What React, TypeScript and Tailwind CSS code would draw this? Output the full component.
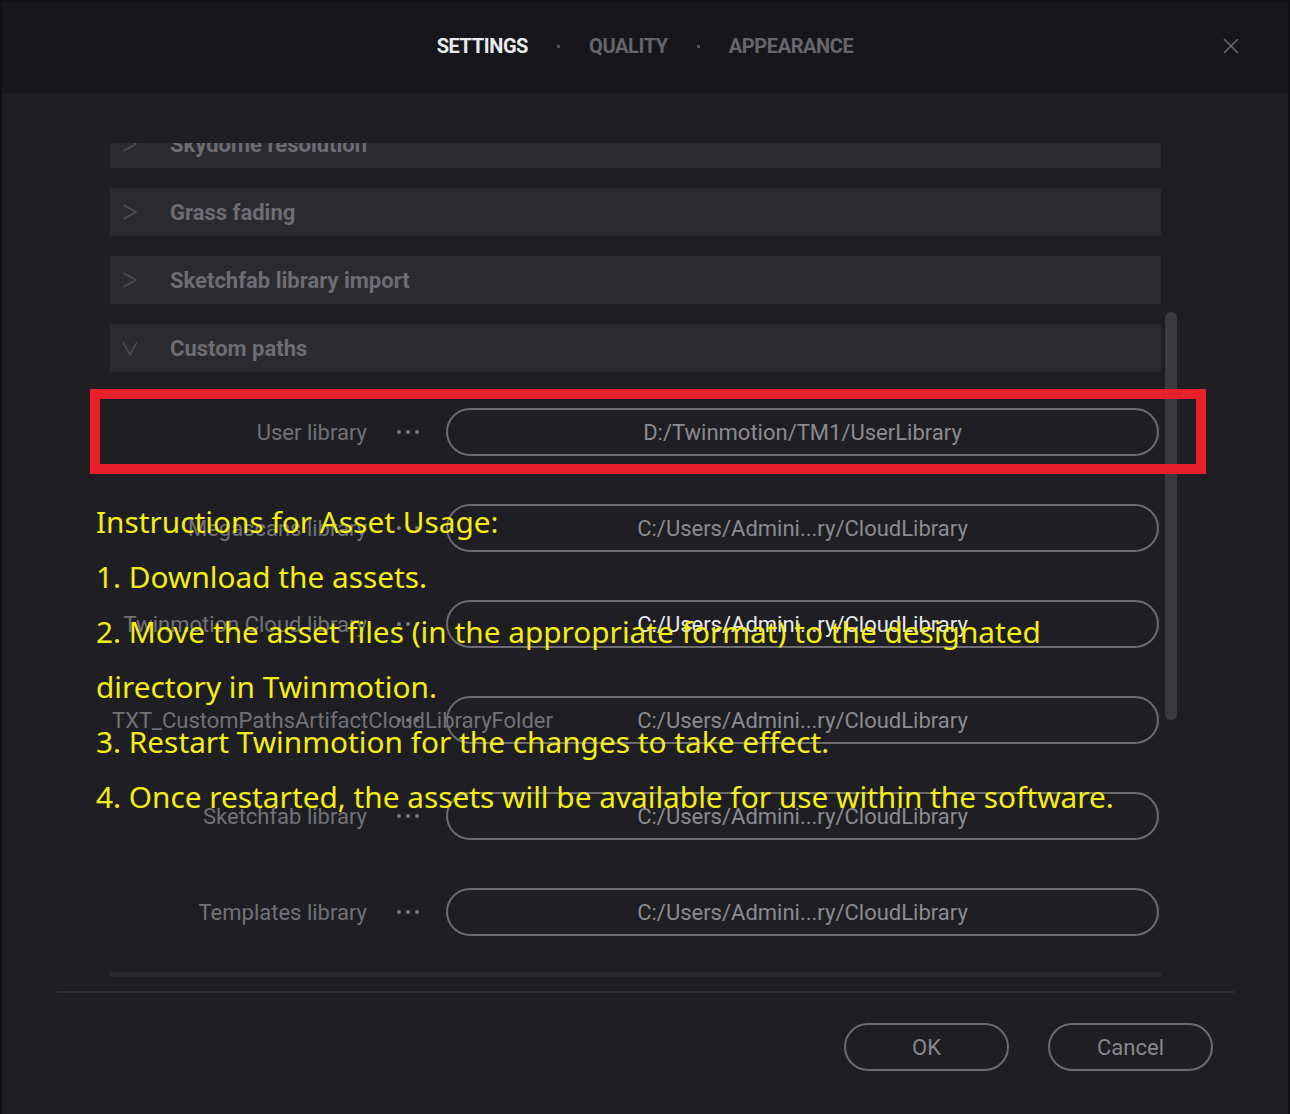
import React from 'react';

const pathRows = [
    { label: 'User library', value: 'D:/Twinmotion/TM1/UserLibrary', bright: false },
    { label: 'Megascans library', value: 'C:/Users/Admini...ry/CloudLibrary', bright: false },
    { label: 'Twinmotion Cloud library', value: 'C:/Users/Admini...ry/CloudLibrary', bright: true },
    { label: 'TXT_CustomPathsArtifactCloudLibraryFolder', value: 'C:/Users/Admini...ry/CloudLibrary', bright: false },
    { label: 'Sketchfab library', value: 'C:/Users/Admini...ry/CloudLibrary', bright: false },
    { label: 'Templates library', value: 'C:/Users/Admini...ry/CloudLibrary', bright: false },
];

const instructions = [
    'Instructions for Asset Usage:',
    '1. Download the assets.',
    '2. Move the asset files (in the appropriate format) to the designated',
    'directory in Twinmotion.',
    '3. Restart Twinmotion for the changes to take effect.',
    '4. Once restarted, the assets will be available for use within the software.',
];

function Chevron({ open }: { open?: boolean }) {
    return (
        <svg width="16" height="16" viewBox="0 0 16 16" fill="none">
            {open ? (
                <polyline points="1,2 8,15 15,2" stroke="#4e4e54" strokeWidth="1.5" />
            ) : (
                <polyline points="1.5,1 14,8 1.5,15" stroke="#4e4e54" strokeWidth="1.5" />
            )}
        </svg>
    );
}

function Section({ title, open }: { title: string; open?: boolean }) {
    return (
        <div className="flex h-[48px] shrink-0 items-center bg-[#2b2b2f]">
            <div className="flex w-[60px] items-center pl-[12px]">
                <Chevron open={open} />
            </div>
            <span className="text-[22px] font-bold text-[#6d6d73]">{title}</span>
        </div>
    );
}

function PathRow({ label, value, bright }: { label: string; value: string; bright: boolean }) {
    return (
        <div className="flex h-[96px] shrink-0 items-center">
            <div className="ml-[2px] w-[255px] whitespace-nowrap text-right text-[22px] text-[#727278]">{label}</div>
            <div className="ml-[30px] flex gap-[5px]">
                <span className="h-[4px] w-[4px] rounded-full bg-[#7a7a80]" />
                <span className="h-[4px] w-[4px] rounded-full bg-[#7a7a80]" />
                <span className="h-[4px] w-[4px] rounded-full bg-[#7a7a80]" />
            </div>
            <div
                className={
                    bright
                        ? 'ml-[27px] flex h-[48px] w-[713px] items-center justify-center rounded-full border-2 border-[#6b6b70] text-[22px] text-[#e8e8ec]'
                        : 'ml-[27px] flex h-[48px] w-[713px] items-center justify-center rounded-full border-2 border-[#6b6b70] text-[22px] text-[#8b8b90]'
                }
            >
                {value}
            </div>
        </div>
    );
}

export default function App() {
    return (
        <div className="relative flex h-[1114px] w-[1290px] flex-col overflow-hidden border-2 border-b-0 border-[#111114] bg-[#1f1f23] font-['Roboto',sans-serif]">
            <header className="grid h-[91px] shrink-0 grid-cols-[1fr_auto_1fr] items-center bg-[#17171b] pb-[3px]">
                <div />
                <nav className="flex items-center gap-[29px] text-[20px] font-bold uppercase tracking-[-0.4px]">
                    <span className="text-[#ebebef]">Settings</span>
                    <span className="h-[3px] w-[3px] bg-[#55555b]" />
                    <span className="text-[#66666c]">Quality</span>
                    <span className="h-[3px] w-[3px] bg-[#55555b]" />
                    <span className="text-[#66666c]">Appearance</span>
                </nav>
                <div className="flex justify-end pr-[49px]">
                    <svg width="16" height="16" viewBox="0 0 16 16" fill="none">
                        <path d="M1 1L15 15M15 1L1 15" stroke="#6a6a70" strokeWidth="1.5" />
                    </svg>
                </div>
            </header>

            <div className="ml-[108px] mt-[50px] flex h-[834px] shrink-0">
                <div className="w-[1051px] overflow-hidden">
                    <div className="-mt-[23px] flex flex-col">
                        <div className="flex flex-col gap-[20px]">
                            <Section title="Skydome resolution" />
                            <Section title="Grass fading" />
                            <Section title="Sketchfab library import" />
                            <Section title="Custom paths" open />
                        </div>
                        <div className="mt-[12px] flex flex-col">
                            {pathRows.map((row) => (
                                <PathRow key={row.label} {...row} />
                            ))}
                        </div>
                        <div className="mt-[12px]">
                            <Section title="Lighting" />
                        </div>
                    </div>
                </div>
                <div className="relative ml-[4px] w-[12px]">
                    <div className="absolute left-0 top-[169px] h-[408px] w-[12px] rounded-full bg-[#3a3a3f]" />
                </div>
            </div>

            <div className="ml-[55px] mt-[14px] h-[2px] w-[1177px] shrink-0 bg-[#2e2e33]" />

            <div className="mt-[30px] flex justify-end gap-[39px] pr-[75px]">
                <button className="flex h-[48px] w-[165px] items-center justify-center rounded-full border-2 border-[#6b6b70] text-[22px] text-[#88888d]">
                    OK
                </button>
                <button className="flex h-[48px] w-[165px] items-center justify-center rounded-full border-2 border-[#6b6b70] text-[22px] text-[#88888d]">
                    Cancel
                </button>
            </div>

            {/* annotation overlays */}
            <div className="pointer-events-none absolute left-[88px] top-[387px] h-[85px] w-[1116px] border-[10px] border-[#e8202b]" />
            <div className="pointer-events-none absolute left-[94px] top-[492px] font-['Noto_Sans',sans-serif] text-[29.8px] leading-[55px] text-[#f5ee12]">
                {instructions.map((line) => (
                    <div key={line} className="whitespace-nowrap">
                        {line}
                    </div>
                ))}
            </div>
        </div>
    );
}
